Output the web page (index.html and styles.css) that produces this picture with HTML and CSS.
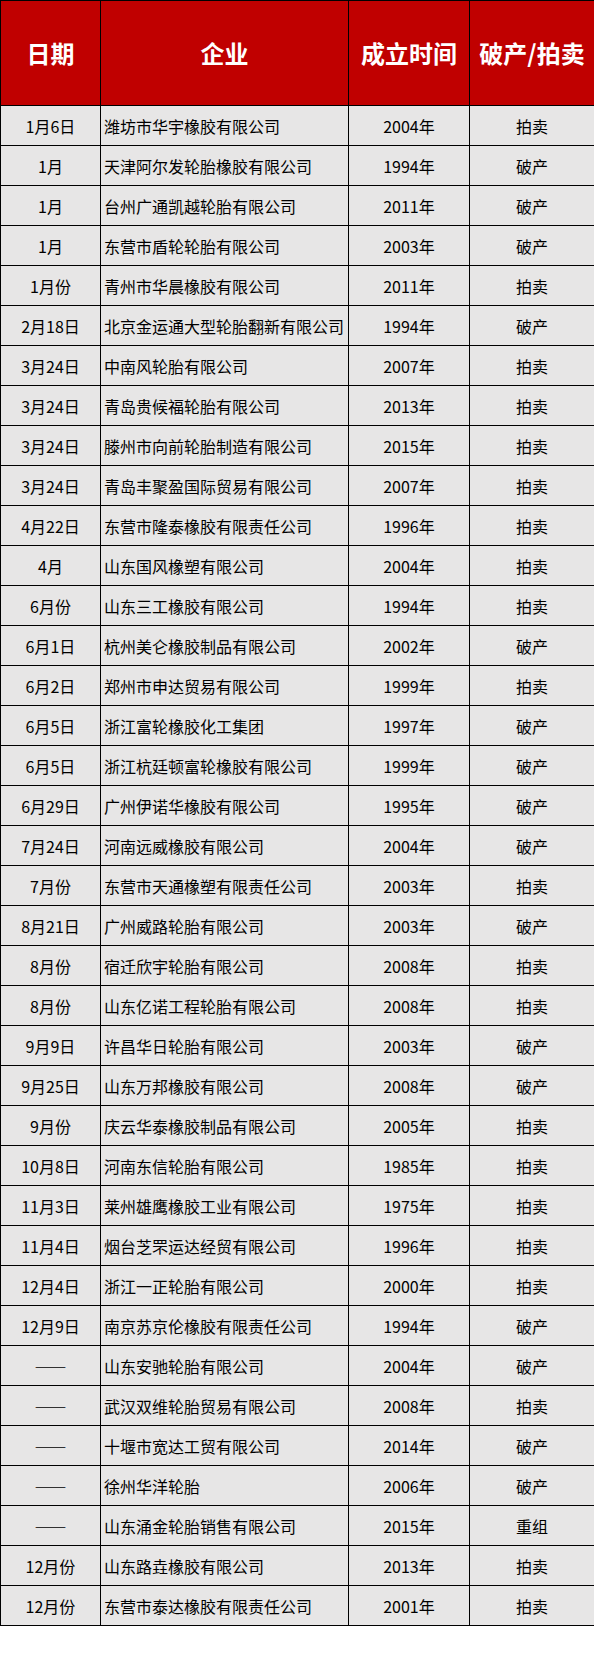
FILE: index.html
```html
<!DOCTYPE html>
<html lang="zh-CN">
<head>
<meta charset="utf-8">
<link rel="stylesheet" href="styles.css">
</head>
<body>
<table class="sheet">
<colgroup>
<col class="c-date"><col class="c-name"><col class="c-year"><col class="c-type">
</colgroup>
<thead>
<tr><th>日期</th><th>企业</th><th>成立时间</th><th>破产/拍卖</th></tr>
</thead>
<tbody>
<tr><td>1月6日</td><td class="name">潍坊市华宇橡胶有限公司</td><td>2004年</td><td>拍卖</td></tr>
<tr><td>1月</td><td class="name">天津阿尔发轮胎橡胶有限公司</td><td>1994年</td><td>破产</td></tr>
<tr><td>1月</td><td class="name">台州广通凯越轮胎有限公司</td><td>2011年</td><td>破产</td></tr>
<tr><td>1月</td><td class="name">东营市盾轮轮胎有限公司</td><td>2003年</td><td>破产</td></tr>
<tr><td>1月份</td><td class="name">青州市华晨橡胶有限公司</td><td>2011年</td><td>拍卖</td></tr>
<tr><td>2月18日</td><td class="name">北京金运通大型轮胎翻新有限公司</td><td>1994年</td><td>破产</td></tr>
<tr><td>3月24日</td><td class="name">中南风轮胎有限公司</td><td>2007年</td><td>拍卖</td></tr>
<tr><td>3月24日</td><td class="name">青岛贵候福轮胎有限公司</td><td>2013年</td><td>拍卖</td></tr>
<tr><td>3月24日</td><td class="name">滕州市向前轮胎制造有限公司</td><td>2015年</td><td>拍卖</td></tr>
<tr><td>3月24日</td><td class="name">青岛丰聚盈国际贸易有限公司</td><td>2007年</td><td>拍卖</td></tr>
<tr><td>4月22日</td><td class="name">东营市隆泰橡胶有限责任公司</td><td>1996年</td><td>拍卖</td></tr>
<tr><td>4月</td><td class="name">山东国风橡塑有限公司</td><td>2004年</td><td>拍卖</td></tr>
<tr><td>6月份</td><td class="name">山东三工橡胶有限公司</td><td>1994年</td><td>拍卖</td></tr>
<tr><td>6月1日</td><td class="name">杭州美仑橡胶制品有限公司</td><td>2002年</td><td>破产</td></tr>
<tr><td>6月2日</td><td class="name">郑州市申达贸易有限公司</td><td>1999年</td><td>拍卖</td></tr>
<tr><td>6月5日</td><td class="name">浙江富轮橡胶化工集团</td><td>1997年</td><td>破产</td></tr>
<tr><td>6月5日</td><td class="name">浙江杭廷顿富轮橡胶有限公司</td><td>1999年</td><td>破产</td></tr>
<tr><td>6月29日</td><td class="name">广州伊诺华橡胶有限公司</td><td>1995年</td><td>破产</td></tr>
<tr><td>7月24日</td><td class="name">河南远威橡胶有限公司</td><td>2004年</td><td>破产</td></tr>
<tr><td>7月份</td><td class="name">东营市天通橡塑有限责任公司</td><td>2003年</td><td>拍卖</td></tr>
<tr><td>8月21日</td><td class="name">广州威路轮胎有限公司</td><td>2003年</td><td>破产</td></tr>
<tr><td>8月份</td><td class="name">宿迁欣宇轮胎有限公司</td><td>2008年</td><td>拍卖</td></tr>
<tr><td>8月份</td><td class="name">山东亿诺工程轮胎有限公司</td><td>2008年</td><td>拍卖</td></tr>
<tr><td>9月9日</td><td class="name">许昌华日轮胎有限公司</td><td>2003年</td><td>破产</td></tr>
<tr><td>9月25日</td><td class="name">山东万邦橡胶有限公司</td><td>2008年</td><td>破产</td></tr>
<tr><td>9月份</td><td class="name">庆云华泰橡胶制品有限公司</td><td>2005年</td><td>拍卖</td></tr>
<tr><td>10月8日</td><td class="name">河南东信轮胎有限公司</td><td>1985年</td><td>拍卖</td></tr>
<tr><td>11月3日</td><td class="name">莱州雄鹰橡胶工业有限公司</td><td>1975年</td><td>拍卖</td></tr>
<tr><td>11月4日</td><td class="name">烟台芝罘运达经贸有限公司</td><td>1996年</td><td>拍卖</td></tr>
<tr><td>12月4日</td><td class="name">浙江一正轮胎有限公司</td><td>2000年</td><td>拍卖</td></tr>
<tr><td>12月9日</td><td class="name">南京苏京伦橡胶有限责任公司</td><td>1994年</td><td>破产</td></tr>
<tr><td class="dash">——</td><td class="name">山东安驰轮胎有限公司</td><td>2004年</td><td>破产</td></tr>
<tr><td class="dash">——</td><td class="name">武汉双维轮胎贸易有限公司</td><td>2008年</td><td>拍卖</td></tr>
<tr><td class="dash">——</td><td class="name">十堰市宽达工贸有限公司</td><td>2014年</td><td>破产</td></tr>
<tr><td class="dash">——</td><td class="name">徐州华洋轮胎</td><td>2006年</td><td>破产</td></tr>
<tr><td class="dash">——</td><td class="name">山东涌金轮胎销售有限公司</td><td>2015年</td><td>重组</td></tr>
<tr><td>12月份</td><td class="name">山东路垚橡胶有限公司</td><td>2013年</td><td>拍卖</td></tr>
<tr><td>12月份</td><td class="name">东营市泰达橡胶有限责任公司</td><td>2001年</td><td>拍卖</td></tr>
</tbody>
</table>
</body>
</html>
```
FILE: styles.css
```css
html, body {
  margin: 0;
  padding: 0;
  background: #ffffff;
}
.sheet {
  border-collapse: collapse;
  table-layout: fixed;
  width: 594px;
  font-family: "Noto Sans CJK SC", "Noto Sans", sans-serif;
  color: #000000;
}
.c-date { width: 100px; }
.c-name { width: 248px; }
.c-year { width: 121px; }
.c-type { width: 125px; }
.sheet th,
.sheet td {
  border: 1px solid #000000;
  padding: 0;
  text-align: center;
  vertical-align: middle;
  white-space: nowrap;
  overflow: hidden;
}
.sheet th {
  background: #c00000;
  color: #ffffff;
  font-size: 24px;
  font-weight: 700;
  height: 104px;
  line-height: 30px;
}
.sheet td {
  background: #e7e6e6;
  font-size: 16px;
  height: 39px;
  line-height: 20px;
}
.sheet td.name {
  text-align: left;
  padding-left: 3px;
}
.sheet td.dash {
  font-feature-settings: "fwid" 1;
  font-family: "Noto Sans CJK SC", sans-serif;
}
```
